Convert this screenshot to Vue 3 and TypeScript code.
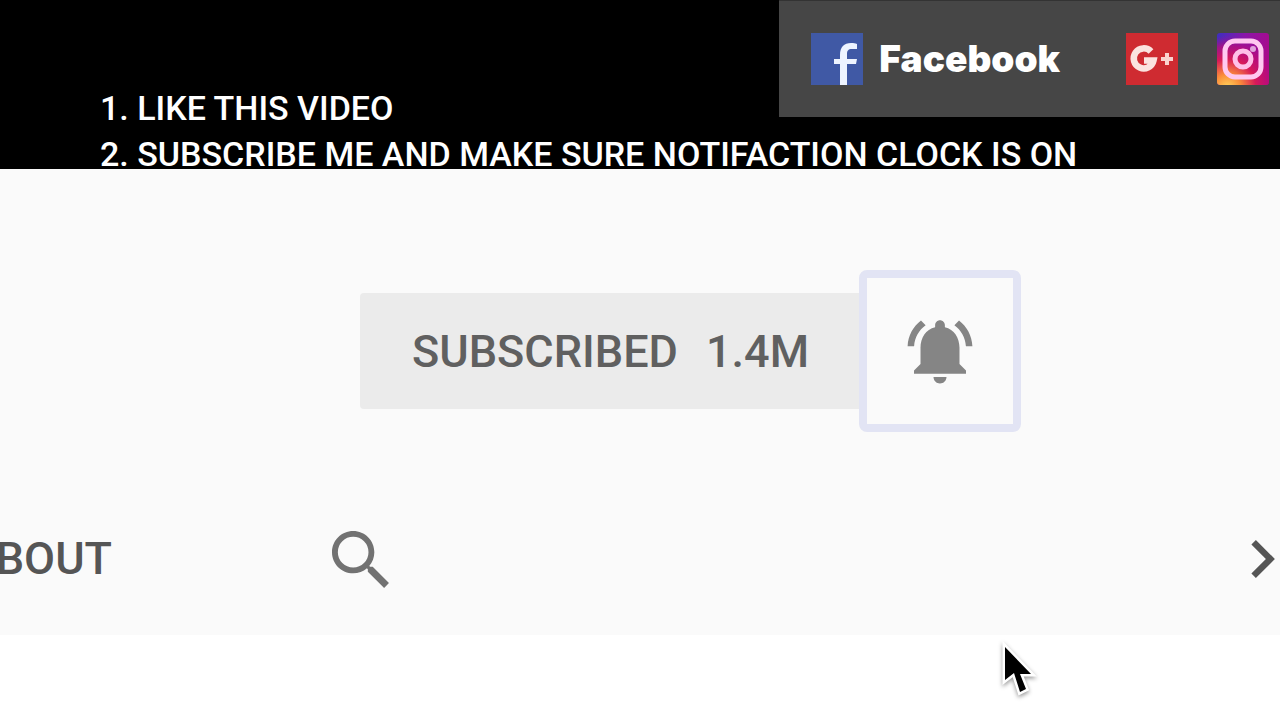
<script setup lang="ts">
import { ref } from 'vue'

const steps: string[] = [
  '1. LIKE THIS VIDEO',
  '2. SUBSCRIBE ME AND MAKE SURE NOTIFACTION CLOCK IS ON',
]
const subscriberCount = ref('1.4M')
</script>

<template>
  <div class="page">
    <header class="banner">
      <ul class="steps">
        <li v-for="step in steps" :key="step">{{ step }}</li>
      </ul>
      <nav class="social" aria-label="Social links">
        <a href="#facebook" class="social-link">
          <svg class="logo" viewBox="0 0 52 52" aria-hidden="true">
            <rect width="52" height="52" fill="#4059a5" />
            <path d="M29 52V31h-6v-5h6v-4c0-8 4-12 11-12 3 0 4 0 6 1v5h-5c-4 0-5 2-5 5v5h10l-1 5h-9v21z" fill="#eef4ff" />
          </svg>
          <span>Facebook</span>
        </a>
        <a href="#google-plus" class="social-link" aria-label="Google Plus">
          <svg class="logo" viewBox="0 0 52 52" aria-hidden="true">
            <rect width="52" height="52" fill="#cf2b31" />
            <path d="M25 18.500A10 10 0 1 0 27.500 27.500H18" fill="none" stroke="#fbe3df" stroke-width="6.500" />
            <path d="M41 20v12M35 26h12" stroke="#fbd3cf" stroke-width="4" />
          </svg>
        </a>
        <a href="#instagram" class="social-link" aria-label="Instagram">
          <svg class="logo" viewBox="0 0 52 52" aria-hidden="true">
            <defs>
              <linearGradient id="ig-top" x1="0" y1="0" x2="1" y2="0.300">
                <stop offset="0" stop-color="#3c2fc0" />
                <stop offset="0.500" stop-color="#8a16a8" />
                <stop offset="1" stop-color="#a80a8c" />
              </linearGradient>
              <radialGradient id="ig-warm" cx="0.200" cy="1.050" r="1">
                <stop offset="0" stop-color="#ffd45c" />
                <stop offset="0.250" stop-color="#fb8f3a" />
                <stop offset="0.550" stop-color="#d81a58" />
                <stop offset="0.800" stop-color="#c00c74" stop-opacity="0.700" />
                <stop offset="1" stop-color="#a80a8c" stop-opacity="0" />
              </radialGradient>
            </defs>
            <rect width="52" height="52" rx="3" fill="url(#ig-top)" />
            <rect width="52" height="52" rx="3" fill="url(#ig-warm)" />
            <rect x="8" y="8" width="36" height="36" rx="10" fill="none" stroke="#ffc9f0" stroke-width="5" />
            <circle cx="26" cy="26" r="8" fill="none" stroke="#ffc0e8" stroke-width="5" />
            <circle cx="36" cy="16" r="3" fill="#e0a4dc" />
          </svg>
        </a>
      </nav>
    </header>

    <main class="channel">
      <div class="actions">
        <button type="button" class="subscribed">
          <span>SUBSCRIBED</span>
          <span>{{ subscriberCount }}</span>
        </button>
        <button type="button" class="bell" aria-label="Notifications">
          <svg viewBox="0 0 24 24" aria-hidden="true">
            <path d="M7.580 4.080 6.150 2.650C3.750 4.480 2.170 7.300 2.030 10.500h2c.15-2.650 1.510-4.970 3.550-6.420zM19.970 10.500h2c-.15-3.200-1.730-6.020-4.120-7.850l-1.420 1.430c2.020 1.450 3.390 3.770 3.540 6.420zM18 11c0-3.070-1.640-5.640-4.500-6.320V4c0-.83-.67-1.500-1.500-1.500s-1.500.67-1.500 1.500v.68C7.630 5.360 6 7.920 6 11v5l-2 2v1h16v-1l-2-2zM10 20c0 1.100.9 2 2 2s2-.9 2-2z" />
          </svg>
        </button>
      </div>

      <nav class="tabs" aria-label="Channel sections">
        <a href="#about" class="tab">ABOUT</a>
        <button type="button" class="search" aria-label="Search">
          <svg viewBox="3 3 17.500 17.500" aria-hidden="true">
            <path d="M15.500 14h-.79l-.28-.27C15.410 12.590 16 11.110 16 9.500 16 5.910 13.090 3 9.500 3S3 5.910 3 9.500 5.910 16 9.500 16c1.610 0 3.090-.59 4.230-1.570l.27.28v.79l5 4.990L20.490 19zM9.500 14.200a4.700 4.700 0 1 1 0-9.400 4.700 4.700 0 0 1 0 9.400z" />
          </svg>
        </button>
        <button type="button" class="next" aria-label="Next">
          <svg viewBox="8.500 6 7.500 12" aria-hidden="true">
            <path d="M10 6 8.590 7.410 13.170 12l-4.580 4.590L10 18l6-6z" />
          </svg>
        </button>
      </nav>
    </main>

    <svg class="pointer" viewBox="0 0 36 56" aria-hidden="true">
      <path d="M5 5v33l9-7 6 19 6-3-6-15h11z" />
    </svg>
  </div>
</template>

<style>
body {
  margin: 0;
  background: #fff;
}
</style>

<style scoped>
.page {
  position: relative;
  min-height: 100vh;
  overflow: hidden;
  background: #fff;
  font-family: Roboto, "Liberation Sans", sans-serif;
}
.banner {
  display: grid;
  background: #000;
}
.steps {
  grid-area: 1 / 1;
  display: grid;
  gap: 18px;
  margin: 0;
  padding: 94px 0 1px 100px;
  list-style: none;
  color: #fff;
  font-size: 34px;
  font-weight: 500;
  line-height: 28px;
  white-space: nowrap;
}
.social {
  grid-area: 1 / 1;
  justify-self: end;
  align-self: start;
  display: flex;
  align-items: center;
  box-sizing: border-box;
  padding: 32px 11px 32px 32px;
  border-top: 1px solid #333;
  background: #464646;
}
.social-link {
  display: flex;
  align-items: center;
  gap: 16px;
  color: #fff;
  font-family: Inter, Roboto, sans-serif;
  font-size: 37px;
  font-weight: 900;
  line-height: 52px;
  text-decoration: none;
}
.social-link + .social-link {
  margin-left: 39px;
}
.social-link:first-child {
  margin-right: 27px;
}
.logo {
  display: block;
  width: 52px;
  height: 52px;
}
.channel {
  padding: 101px 0 47px;
  background: #fafafa;
}
.actions {
  display: flex;
  align-items: center;
  justify-content: center;
  padding-left: 101px;
}
button {
  border: 0;
  background: none;
  font: inherit;
  padding: 0;
}
svg {
  display: block;
}
.subscribed {
  display: flex;
  align-items: center;
  gap: 28px;
  box-sizing: border-box;
  height: 116px;
  padding: 0 50px 0 52px;
  border-radius: 4px 0 0 4px;
  background: #ebebeb;
  color: #606060;
  font-size: 45px;
  font-weight: 500;
}
.bell {
  display: flex;
  align-items: center;
  justify-content: center;
  width: 162px;
  height: 162px;
  box-sizing: border-box;
  border: 8px solid #e2e4f4;
  border-radius: 8px;
  background: #fafafa;
}
.bell svg {
  width: 78px;
  height: 78px;
  fill: #858585;
}
.tabs {
  display: flex;
  align-items: center;
  margin-top: 98px;
  padding-right: 5px;
}
.tab {
  display: flex;
  justify-content: flex-end;
  width: 112px;
  color: #555;
  font-size: 45px;
  font-weight: 500;
  line-height: 58px;
  text-decoration: none;
}
.search {
  margin-left: 220px;
}
.search svg {
  width: 57px;
  height: 57px;
  fill: #727272;
}
.next {
  margin-left: auto;
}
.next svg {
  width: 24px;
  height: 38px;
  fill: #555;
}
.pointer {
  position: absolute;
  left: 1000px;
  top: 642px;
  width: 36px;
  height: 56px;
  overflow: visible;
  fill: #000;
  stroke: #fff;
  stroke-width: 5px;
  paint-order: stroke;
  filter: drop-shadow(0 2px 2px rgba(0, 0, 0, 0.4));
}
</style>
